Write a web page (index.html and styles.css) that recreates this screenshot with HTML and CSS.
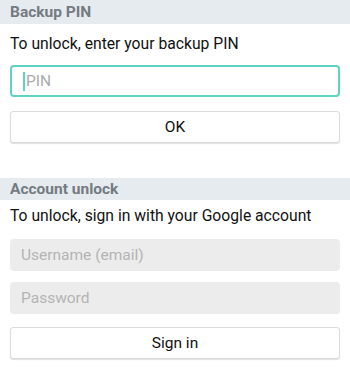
FILE: index.html
```html
<!DOCTYPE html>
<html lang="en">
<head>
    <meta charset="UTF-8">
    <meta name="viewport" content="width=device-width, initial-scale=1.0">
    <title>Unlock</title>
    <link rel="stylesheet" href="styles.css">
</head>
<body>
    <div class="section">
        <div class="section-title">Backup PIN</div>
        <div class="section-body">
            <p class="hint">To unlock, enter your backup PIN</p>
            <div class="field field-active">
                <span class="caret"></span>
                <span class="placeholder">PIN</span>
            </div>
            <button class="btn">OK</button>
        </div>
    </div>

    <div class="section section-account">
        <div class="section-title">Account unlock</div>
        <div class="section-body">
            <p class="hint">To unlock, sign in with your Google account</p>
            <div class="field field-disabled">
                <span class="placeholder">Username (email)</span>
            </div>
            <div class="field field-disabled">
                <span class="placeholder">Password</span>
            </div>
            <button class="btn btn-sign">Sign in</button>
        </div>
    </div>
</body>
</html>
```

FILE: styles.css
```css
body {
    margin: 0;
    width: 350px;
    height: 382px;
    overflow: hidden;
    background-color: #fff;
    font-family: 'Roboto', 'Liberation Sans', sans-serif;
    color: #111;
}

.section-title {
    height: 24px;
    line-height: 25px;
    padding: 0 10px;
    background-color: #e6ebef;
    color: #737b81;
    font-size: 15.5px;
    font-weight: bold;
}

.section-body {
    padding: 0 10px 0 10px;
}

.hint {
    margin: 10px 0 0;
    height: 20px;
    line-height: 20px;
    font-size: 15.7px;
}

.field {
    display: flex;
    align-items: center;
    height: 32px;
    padding: 0 11px;
    box-sizing: border-box;
    border-radius: 4px;
    font-size: 15.5px;
}

.field-active {
    margin-top: 11px;
    border: 2px solid #5dd3c4;
}

.caret {
    width: 2px;
    height: 19px;
    background-color: #5dd3c4;
    margin-right: 1px;
}

.field-active .placeholder {
    color: #a9a9a9;
}

.field-disabled {
    background-color: #ececec;
    color: #b4b4b4;
}

.btn {
    display: block;
    width: 100%;
    height: 32px;
    margin-top: 14px;
    background-color: #fff;
    border: 1px solid #dcdcdc;
    border-radius: 3px;
    box-shadow: 0 1px 1px rgba(0, 0, 0, 0.12);
    font-family: inherit;
    font-size: 15.5px;
    color: #111;
}

.section-account {
    margin-top: 35px;
}

.section-account .section-title {
    height: 22px;
    line-height: 22px;
}

.section-account .hint {
    margin-top: 6px;
}

.section-account .field-disabled {
    margin-top: 13px;
}

.section-account .field-disabled + .field-disabled {
    margin-top: 11px;
}

.btn-sign {
    margin-top: 13px;
}
```
